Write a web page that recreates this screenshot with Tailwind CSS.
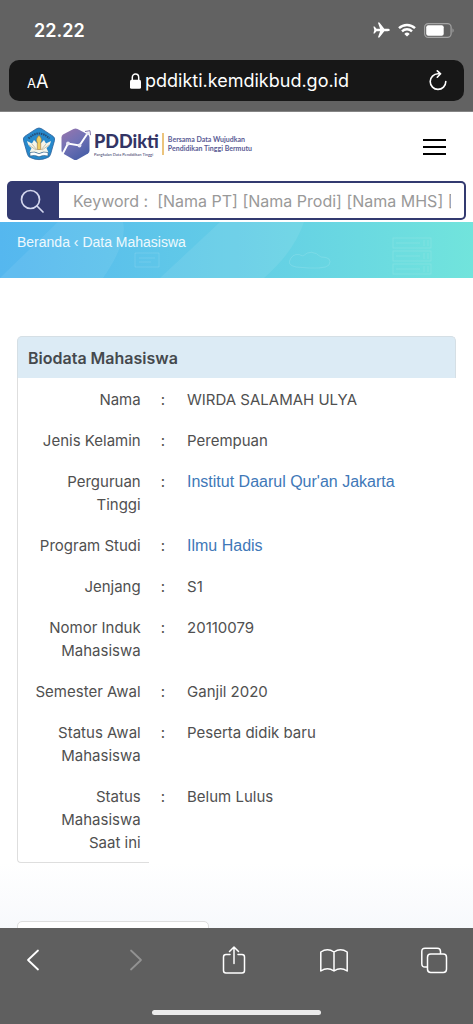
<!DOCTYPE html>
<html lang="id">
  <head>
    <meta charset="utf-8" />
    <meta name="viewport" content="width=device-width, initial-scale=1" />
    <title>PDDikti - Data Mahasiswa</title>
    <script src="https://cdn.jsdelivr.net/npm/@tailwindcss/browser@4"></script>
  </head>
  <body class="h-screen flex flex-col overflow-hidden bg-white font-[Inter,sans-serif] text-[15px] text-[#505050]">
    <!-- Browser top bar -->
    <header class="shrink-0 bg-[#626262] text-white pb-[10px] border-b border-[#858585]">
      <div class="h-[60px] flex items-center justify-between pl-[34px] pr-[19px]">
        <span class="text-[18px] font-semibold">22.22</span>
        <div class="flex items-center gap-[8px]">
          <svg class="w-[17px] h-[16px]" viewBox="0 0 17 16" fill="currentColor"><path d="M16.8 8c0-.8-1.100-1.200-2.200-1.200h-3.300L6.800.9C6.500.5 6.200.4 5.800.4h-.9l2.200 6.400H3.500L1.800 4.800c-.2-.2-.4-.3-.7-.3H.4L1.300 8l-.9 3.500h.7c.3 0 .5-.1.700-.3l1.700-2h3.600l-2.200 6.400h.9c.4 0 .7-.1 1-.5l4.500-5.900h3.300c1.100 0 2.200-.4 2.200-1.200z"/></svg>
          <svg class="w-[18px] h-[14px]" viewBox="0 0 18 14" fill="none" stroke="currentColor" stroke-width="2.400"><path d="M1 5.200a11.500 11.500 0 0 1 16 0M4 8.300a7.200 7.200 0 0 1 10 0"/><path d="M9 13.600 6.300 10.900a3.900 3.900 0 0 1 5.400 0z" fill="currentColor" stroke="none"/></svg>
          <svg class="w-[30px] h-[15px]" viewBox="0 0 30 15" fill="none"><rect x=".6" y=".6" width="26.500" height="13.800" rx="3.600" stroke="#a3a3a3" stroke-width="1.200"/><rect x="2.200" y="2.300" width="17.500" height="10.400" rx="2" fill="#fff"/><path d="M28.500 5.300c1.500.8 1.500 3.600 0 4.400z" fill="#a3a3a3"/></svg>
        </div>
      </div>
      <div class="h-[41px] mx-[9px] px-[16px] rounded-[10px] bg-[#171717] flex items-center justify-between">
        <button type="button" class="w-[26px] whitespace-nowrap text-left pl-[2px] pt-[2px] leading-none" aria-label="Ukuran teks"><span class="text-[13px]">A</span><span class="text-[18px]">A</span></button>
        <div class="flex items-center gap-[4px] text-[18px]">
          <svg class="w-[11px] h-[16px]" viewBox="0 0 11 16"><rect y="6.800" width="11" height="9" rx="1.600" fill="#fff"/><path d="M2.300 7.500V4.400a3.200 3.400 0 0 1 6.400 0v3.100" fill="none" stroke="#fff" stroke-width="1.500"/></svg>
          <span>pddikti.kemdikbud.go.id</span>
        </div>
        <button type="button" aria-label="Muat ulang">
          <svg class="w-[20px] h-[22px]" viewBox="0 0 20 22" fill="none" stroke="currentColor" stroke-width="1.600" stroke-linecap="round" stroke-linejoin="round"><path d="M12 3.800H10a7.800 7.800 0 1 0 7.800 7.800M9.300.9l3.300 2.900-3.300 3.400"/></svg>
        </button>
      </div>
    </header>

    <main class="flex-1 min-h-0 overflow-hidden flex flex-col bg-linear-to-b from-white from-92% to-[#f7f9fc]">
      <!-- Site header -->
      <div class="h-[69px] shrink-0 flex items-center justify-between pl-[22px] pr-[27px]">
        <a href="#" class="flex items-center pb-[6px]">
          <svg class="w-[34px] h-[34px]" viewBox="0 0 34 34">
            <path d="M14.500 1.700Q17 .3 19.500 1.700L31 9.200Q33.200 10.800 32.500 13.500L28.500 27.500Q27.700 30 25.300 30.700Q17 34.500 8.700 30.700Q6.300 30 5.500 27.500L1.500 13.500Q.8 10.800 3 9.200Z" fill="#2689cc" stroke="#2b5f99" stroke-width=".8"/>
            <path d="M6.500 11.500Q17 1.500 27.500 11.500" fill="none" stroke="#244e78" stroke-width="2" stroke-dasharray="1.500 .8"/>
            <path d="M5 14q1 5 4.500 7L7.500 25.500l6.500-.5 3 2 3-2 6.500.5-2-4.500q3.500-2 4.500-7l-5 2.500-2-3.500-5 5-5-5-2 3.500z" fill="#f6f5e9"/>
            <path d="M7 18l7 5M27 18l-7 5M10 17l5 6M24 17l-5 6" stroke="#a79f86" stroke-width=".6"/>
            <path d="M17 8.500c3 3 2.700 5 1.700 7v7h-3.400v-7c-1-2-1.300-4 1.700-7z" fill="#efce62" stroke="#a0763c" stroke-width=".6"/>
            <path d="M8 25.500q4.500-1.500 9 1.200q4.500-2.700 9-1.200v3.500q-4.500-1.500-9 .8q-4.500-2.300-9-.8z" fill="#fff" stroke="#31577b" stroke-width=".6"/>
          </svg>
          <svg class="w-[32px] h-[34px] ml-[4px]" viewBox="0 0 32 34">
            <defs><linearGradient id="hex" x1="0" y1="0" x2=".6" y2="1"><stop stop-color="#9a75ac"/><stop offset=".5" stop-color="#7372b5"/><stop offset="1" stop-color="#4a5fa8"/></linearGradient></defs>
            <path d="M13.500 2Q15.500 1 17.500 2L28 7.500Q29.500 8.500 29.500 10.500V23.500Q29.500 25.500 28 26.500L17.500 32.500Q15.500 33.500 13.500 32.500L3 26.500Q1.500 25.500 1.500 23.500V10.500Q1.500 8.500 3 7.500Z" fill="url(#hex)"/>
            <path d="M2 28 8 16.500l11.500 2L27.500 6.500" fill="none" stroke="#fff" stroke-width="2"/>
            <g fill="#e9e8f5"><circle cx="8" cy="16.500" r="1.900"/><circle cx="19.500" cy="18.500" r="1.900"/><circle cx="27.500" cy="6.500" r="1.600"/></g>
            <path d="m25 4.500 5-.8.500 4.500" fill="none" stroke="#8275ac" stroke-width="1"/>
          </svg>
          <div class="ml-[2px] font-[Lato,sans-serif] text-[#333465]">
            <div class="text-[18px] leading-[22px] font-black">PDDikti</div>
            <div class="text-[4px] leading-[5px] whitespace-nowrap">Pangkalan Data Pendidikan Tinggi</div>
          </div>
          <div class="ml-[3px] pl-[4px] py-[2px] border-l-2 border-[#ecc47c] font-[Lato,sans-serif] font-bold text-[7px] leading-[9px] text-[#5a5b94] whitespace-nowrap">
            Bersama Data Wujudkan<br />Pendidikan Tinggi Bermutu
          </div>
        </a>
        <button type="button" class="w-[23px] flex flex-col gap-[5px]" aria-label="Menu">
          <span class="h-[2px] bg-black"></span>
          <span class="h-[2px] bg-black"></span>
          <span class="h-[2px] bg-black"></span>
        </button>
      </div>

      <!-- Search -->
      <form class="h-[39px] shrink-0 mx-[7px] mb-[2px] p-[2px] flex rounded-[5px] bg-[#333a70]">
        <button type="submit" class="w-[50px] shrink-0 flex items-center justify-center" aria-label="Cari">
          <svg class="w-[24px] h-[24px] mr-[4px]" viewBox="0 0 24 24" fill="none" stroke="#d3d6ee" stroke-width="1.700" stroke-linecap="round"><circle cx="10.500" cy="10.500" r="9"/><path d="m17 17 6 6"/></svg>
        </button>
        <input type="text" aria-label="Keyword" placeholder="Keyword :  [Nama PT] [Nama Prodi] [Nama MHS] [Nama Dosen]" class="flex-1 min-w-0 pl-[14px] pr-[13px] rounded-r-[3px] bg-white text-[16px] outline-none placeholder:text-[#999]" />
      </form>

      <!-- Breadcrumb banner -->
      <div class="relative h-[56px] shrink-0 bg-linear-to-r from-[#55b7ef] via-[#63cde6] to-[#71e4dc]">
        <svg class="absolute inset-0 w-full h-full" viewBox="0 0 473 56" preserveAspectRatio="none" fill="none">
          <path d="M0 56 58 0h65q5 20-20 56z" fill="#fff" fill-opacity=".07"/>
          <path d="M160 56 220 0h84q-10 30-40 56z" fill="#fff" fill-opacity=".08"/>
          <g stroke="#fff" stroke-opacity=".12"><rect x="393" y="16" width="38" height="10"/><rect x="393" y="29" width="38" height="10"/><rect x="393" y="42" width="38" height="10"/><path d="M396 21h24M396 34h24M396 47h24M424 18v6M428 18v6M424 31v6M428 31v6M424 44v6M428 44v6"/><path d="M296 45q-10-2-5-9 4-6 12-2 8-8 18 1 12 0 8 8-4 5-33 2zM135 31h24v14h-24zM139 36h16M139 40h12"/></g>
        </svg>
        <nav class="relative pt-[11px] pl-[17px] font-['Liberation_Sans',sans-serif] text-[14px] leading-[18px] text-white/90">
          <a href="#">Beranda</a> ‹ <a href="#">Data Mahasiswa</a>
        </nav>
      </div>

      <!-- Student details -->
      <section class="mt-[58px] mx-[17px] shrink-0">
        <h2 class="h-[42px] flex items-center pl-[10px] pt-px rounded-t-[5px] border border-b-0 border-[#d5dfe5] bg-[#dcebf5] text-[16px] font-semibold text-[#45494d]">Biodata Mahasiswa</h2>
        <table class="w-full table-fixed border-separate border-spacing-0 leading-[23px] [&_td]:align-top [&_td]:pt-[10px] [&_td]:pb-[8px] [&_th]:align-top [&_th]:pt-[10px] [&_th]:pb-[8px] [&_th]:pr-[8px] [&_th]:text-right [&_th]:font-normal [&_th]:border-l [&_th]:border-[#dedede] [&_td:nth-child(2)]:text-center [&_td:nth-child(2)]:pl-[2px] [&_td:nth-child(3)]:pl-[12px] [&_a]:text-[16px] [&_a]:text-[#4078b8] [&_a]:font-['Liberation_Sans',sans-serif]">
          <colgroup><col class="w-[30%]" /><col class="w-[6%]" /><col /></colgroup>
          <tbody>
            <tr><th scope="row">Nama</th><td>:</td><td>WIRDA SALAMAH ULYA</td></tr>
            <tr><th scope="row">Jenis Kelamin</th><td>:</td><td>Perempuan</td></tr>
            <tr><th scope="row">Perguruan<br />Tinggi</th><td>:</td><td><a href="#">Institut Daarul Qur'an Jakarta</a></td></tr>
            <tr><th scope="row">Program Studi</th><td>:</td><td><a href="#">Ilmu Hadis</a></td></tr>
            <tr><th scope="row">Jenjang</th><td>:</td><td>S1</td></tr>
            <tr><th scope="row">Nomor Induk<br />Mahasiswa</th><td>:</td><td>20110079</td></tr>
            <tr><th scope="row">Semester Awal</th><td>:</td><td>Ganjil 2020</td></tr>
            <tr><th scope="row">Status Awal<br />Mahasiswa</th><td>:</td><td>Peserta didik baru</td></tr>
            <tr><th scope="row" class="border-b rounded-bl-[4px]">Status<br />Mahasiswa<br />Saat ini</th><td>:</td><td>Belum Lulus</td></tr>
          </tbody>
        </table>
      </section>
      <div class="mt-[58px] ml-[17px] w-[192px] h-[40px] shrink-0 rounded-t-[5px] border border-[#dedede] bg-white"></div>
    </main>

    <!-- Browser bottom bar -->
    <footer class="h-[96px] shrink-0 bg-[#5f5f5f] text-white flex flex-col items-center justify-between pt-[16px] pb-[9px]">
      <div class="w-full h-[32px] flex items-center justify-between pl-[19px] pr-[25px]">
        <button type="button" aria-label="Kembali"><svg class="w-[28px] h-[28px]" viewBox="0 0 28 28" fill="none" stroke="currentColor" stroke-width="1.800" stroke-linecap="round" stroke-linejoin="round"><path d="M19 4.500 9 14l10 9.500"/></svg></button>
        <button type="button" class="text-[#929292]" aria-label="Maju"><svg class="w-[28px] h-[28px]" viewBox="0 0 28 28" fill="none" stroke="currentColor" stroke-width="1.800" stroke-linecap="round" stroke-linejoin="round"><path d="m12 4.500 10 9.500-10 9.500"/></svg></button>
        <button type="button" aria-label="Bagikan"><svg class="w-[28px] h-[28px]" viewBox="0 0 28 28" fill="none" stroke="currentColor" stroke-width="1.500" stroke-linecap="round" stroke-linejoin="round"><path d="M10 8.500H6q-2.500 0-2.500 2.500v13.500Q3.500 27 6 27h16q2.500 0 2.500-2.500V11q0-2.500-2.500-2.500h-4M14 17.500V1.500M9.500 5.500l4.500-4.500 4.500 4.500"/></svg></button>
        <button type="button" aria-label="Markah"><svg class="w-[28px] h-[28px]" viewBox="0 0 28 28" fill="none" stroke="currentColor" stroke-width="1.500" stroke-linecap="round" stroke-linejoin="round"><path d="M14 6Q7.500 1.500.8 6v19Q7.500 20.500 14 25q6.500-4.500 13.200 0V6Q20.500 1.500 14 6zv19"/></svg></button>
        <button type="button" aria-label="Tab"><svg class="w-[28px] h-[28px]" viewBox="0 0 28 28" fill="none" stroke="currentColor" stroke-width="1.500"><rect x="7.500" y="8" width="19" height="18.500" rx="3.200"/><path d="M7.500 21H5q-3.200 0-3.200-3.200V5.400Q1.800 2.200 5 2.200h12.300q3.200 0 3.200 3.200V8"/></svg></button>
      </div>
      <div class="w-[169px] h-[5px] rounded-full bg-[#ebebeb]"></div>
    </footer>
  </body>
</html>
